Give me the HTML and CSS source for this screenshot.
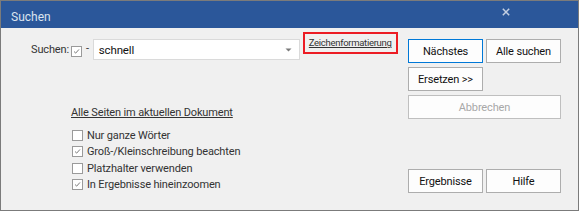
FILE: index.html
```html
<!DOCTYPE html>
<html lang="de">
<head>
<meta charset="utf-8">
<title>Suchen</title>
<link rel="stylesheet" href="styles.css">
</head>
<body>
<div class="window">
  <div class="titlebar">
    <span class="title">Suchen</span>
    <svg class="close" width="8" height="8" viewBox="0 0 8 8"><path d="M0.8 0.8L7.2 7.2M7.2 0.8L0.8 7.2" stroke="#c3cfe2" stroke-width="1.5"/></svg>
  </div>
  <div class="content">
    <div class="left">
      <div class="search-row">
        <span class="label">Suchen:</span>
        <span class="cb checked"><svg viewBox="0 0 11 11"><path d="M2.5 5.5L4.5 7.5L8.5 3" fill="none" stroke="#777" stroke-width="1.2"/></svg></span>
        <span class="dash">-</span>
        <div class="combo">
          <span class="combo-text">schnell</span>
          <svg class="arrow" width="7" height="4" viewBox="0 0 7 4"><path d="M0.5 0.5H6.5L3.5 3.5Z" fill="#7a7a7a"/></svg>
        </div>
        <div class="fmt-box"><span class="fmt-link">Zeichenformatierung</span></div>
      </div>
      <div class="scope">Alle Seiten im aktuellen Dokument</div>
      <ul class="options">
        <li><span class="cb"></span>Nur ganze Wörter</li>
        <li><span class="cb checked"><svg viewBox="0 0 11 11"><path d="M2.5 5.5L4.5 7.5L8.5 3" fill="none" stroke="#777" stroke-width="1.2"/></svg></span>Groß-/Kleinschreibung beachten</li>
        <li><span class="cb"></span>Platzhalter verwenden</li>
        <li><span class="cb checked"><svg viewBox="0 0 11 11"><path d="M2.5 5.5L4.5 7.5L8.5 3" fill="none" stroke="#777" stroke-width="1.2"/></svg></span>In Ergebnisse hineinzoomen</li>
      </ul>
    </div>
    <div class="right">
      <div class="btn-row">
        <button class="btn default">Nächstes</button>
        <button class="btn">Alle suchen</button>
      </div>
      <div class="btn-row">
        <button class="btn">Ersetzen &gt;&gt;</button>
      </div>
      <div class="btn-row">
        <button class="btn wide" disabled>Abbrechen</button>
      </div>
      <div class="btn-row bottom">
        <button class="btn">Ergebnisse</button>
        <button class="btn">Hilfe</button>
      </div>
    </div>
  </div>
</div>
</body>
</html>
```

FILE: styles.css
```css
* { box-sizing: border-box; }
html, body { margin: 0; padding: 0; background: #f0f0f0; }
body {
  font-family: Roboto, "Liberation Sans", Arial, sans-serif;
  font-size: 11px;
  letter-spacing: -0.15px;
  color: #333;
}

.window {
  width: 579px;
  height: 211px;
  border: 1px solid #7b7b7b;
  background: #f0f0f0;
  display: flex;
  flex-direction: column;
}

.titlebar {
  height: 30px;
  background: #2b579a;
  display: flex;
  align-items: center;
  justify-content: space-between;
  padding: 0 68px 0 10px;
}
.title { color: #dce4ef; font-size: 12px; letter-spacing: 0; padding-top: 5px; }
.close { margin-top: -5px; }

.content {
  flex: 1;
  display: flex;
  padding: 11px 17px 17px 0;
}

.left { flex: 1; padding-left: 30px; }

.search-row {
  display: flex;
  align-items: flex-start;
  height: 21px;
}
.label { margin-top: 4px; }
.search-row .cb { margin: 7px 0 0 2px; }
.dash { margin: 3px 0 0 4px; }
.combo {
  margin-left: 4px;
  width: 207px;
  height: 21px;
  border: 1px solid #dadada;
  background: #fff;
  display: flex;
  align-items: center;
  justify-content: space-between;
  padding: 0 7px 0 5px;
}
.combo-text { color: #111; font-size: 11.5px; }
.arrow { margin-top: 1px; }

.fmt-box {
  margin: -7px 0 0 3px;
  width: 95px;
  height: 22px;
  border: 2px solid #ec1c24;
  display: flex;
  align-items: center;
  padding-left: 4px;
}
.fmt-link {
  font-size: 9.5px;
  color: #333;
  text-decoration: underline;
  letter-spacing: -0.3px;
  margin-top: -1px;
}

.scope {
  margin: 45px 0 0 40px;
  text-decoration: underline;
  line-height: 16px;
}

.options {
  list-style: none;
  margin: 6px 0 0 41px;
  padding: 0;
}
.options li {
  display: flex;
  align-items: center;
  height: 16.5px;
}
.options .cb { margin-right: 4px; }

.cb {
  width: 11px;
  height: 11px;
  border: 1px solid #9a9a9a;
  background: #fff;
  display: inline-block;
  flex: none;
}
.cb svg { display: block; width: 9px; height: 9px; }

.right {
  width: 153px;
  display: flex;
  flex-direction: column;
  gap: 4px;
}
.btn-row { display: flex; gap: 3px; }
.btn-row.bottom { margin-top: auto; }
.btn {
  width: 75px;
  height: 24px;
  border: 1px solid #adadad;
  background: #fdfdfd;
  font-family: inherit;
  font-size: 11px;
  letter-spacing: -0.15px;
  color: #111;
  padding: 0;
  margin: 0;
}
.btn.default { border-color: #0078d7; }
.btn.wide { width: 153px; }
.btn:disabled { color: #a8a8a8; border-color: #bfbfbf; background: #fdfdfd; }
```
